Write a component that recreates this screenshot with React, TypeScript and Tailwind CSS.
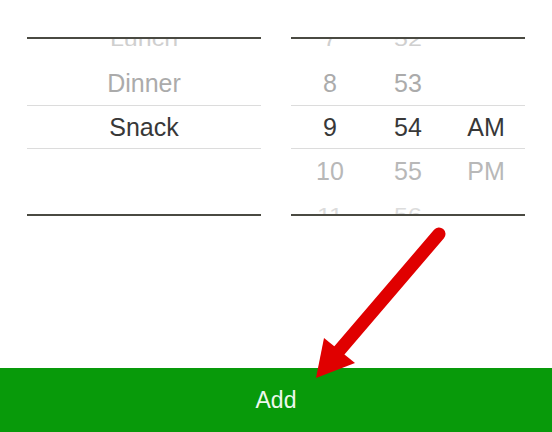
import React from "react";

type Row = { cells: string[]; tone: string; squash?: boolean; selected?: boolean };

function Picker({ rows, cols }: { rows: Row[]; cols: number }) {
  return (
    <div className="flex-1 h-[179px] border-y-2 border-[#4a4a42] overflow-hidden">
      <div className="-mt-[22px] flex flex-col">
        {rows.map((r, i) => (
          <div
            key={i}
            className={
              "h-[44px] items-center " +
              (cols === 3 ? "grid grid-cols-3 " : "flex justify-center ") +
              (r.selected ? "border-y border-[#dcdcdc]" : "")
            }
          >
            {r.cells.map((c, j) => (
              <span
                key={j}
                className={"text-center text-[25px] leading-none " + r.tone + (r.squash ? " scale-y-[0.78]" : "")}
              >
                {c}
              </span>
            ))}
          </div>
        ))}
      </div>
    </div>
  );
}

export default function App() {
  const left: Row[] = [
    { cells: ["Lunch"], tone: "text-[#cfcfcf]", squash: true },
    { cells: ["Dinner"], tone: "text-[#ababab]" },
    { cells: ["Snack"], tone: "text-[#383838]", selected: true },
    { cells: [""], tone: "text-[#b8b8b8]" },
    { cells: [""], tone: "text-[#dddddd]" },
  ];
  const right: Row[] = [
    { cells: ["7", "52", ""], tone: "text-[#cfcfcf]", squash: true },
    { cells: ["8", "53", ""], tone: "text-[#ababab]" },
    { cells: ["9", "54", "AM"], tone: "text-[#383838]", selected: true },
    { cells: ["10", "55", "PM"], tone: "text-[#b8b8b8]" },
    { cells: ["11", "56", ""], tone: "text-[#dcdcdc]", squash: true },
  ];
  return (
    <div className="relative w-[552px] h-[432px] bg-white flex flex-col font-['Liberation_Sans',Arial,sans-serif] overflow-hidden">
      <div className="mt-[37px] flex gap-[30px] px-[27px]">
        <Picker rows={left} cols={1} />
        <Picker rows={right} cols={3} />
      </div>
      <div className="mt-auto h-[64px] bg-[#089a0a] flex items-center justify-center text-[23px] text-[#eef8ee]">
        Add
      </div>
      <svg
        className="absolute inset-0 pointer-events-none"
        width="552"
        height="432"
        viewBox="0 0 552 432"
      >
        <line x1="439" y1="234" x2="338" y2="352" stroke="#e00000" strokeWidth="13" strokeLinecap="round" />
        <polygon points="316,378 324,338 355,363" fill="#e00000" />
      </svg>
    </div>
  );
}
